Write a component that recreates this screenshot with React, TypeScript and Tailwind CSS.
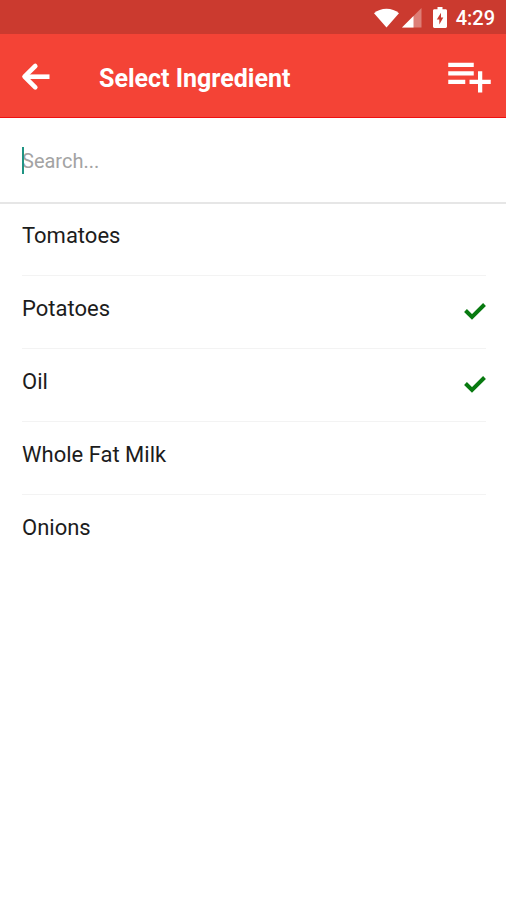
type Ingredient = { name: string; selected?: boolean };

const ingredients: Ingredient[] = [
  { name: "Tomatoes" },
  { name: "Potatoes", selected: true },
  { name: "Oil", selected: true },
  { name: "Whole Fat Milk" },
  { name: "Onions" },
];

function StatusBar() {
  return (
    <div className="flex h-[34px] items-center justify-end bg-[#cb3a2f] pt-px pr-[11px] text-white">
      <svg className="h-5 w-[25px]" viewBox="0 0 26 20" fill="currentColor" aria-hidden="true">
        <path d="M0 5C3.5 2 8 .3 13 .3S22.500 2 26 5L13 20z" />
      </svg>
      <svg className="ml-[3px] h-5 w-5" viewBox="0 0 20 20" fill="currentColor" aria-hidden="true">
        <path d="M0 19.500 19.500 0v19.500z" opacity=".35" />
        <path d="M0 19.500 11.500 8v11.500z" />
      </svg>
      <svg className="ml-[11px] h-[21px] w-[14px]" viewBox="0 0 14 21" aria-hidden="true">
        <path
          d="M4.500 0h5v2.300h3.100c.8 0 1.400.6 1.400 1.400v15.900c0 .8-.6 1.400-1.400 1.400H1.400C.6 21 0 20.400 0 19.600V3.700c0-.8.6-1.400 1.400-1.400h3.100z"
          fill="currentColor"
        />
        <path d="M8 5.800 3.800 12.400h2.500v5L10.300 10.600H8z" fill="#cb3a2f" />
      </svg>
      <span className="ml-[9px] text-[20px] leading-6 font-medium">4:29</span>
    </div>
  );
}

function Header() {
  return (
    <header className="flex h-[84px] items-center border-b border-[#ee1111] bg-[#f44336] pr-[11px] pl-5 text-white">
      <button type="button" aria-label="Back" className="size-8">
        <svg
          className="size-8"
          viewBox="0 0 32 32"
          fill="none"
          stroke="currentColor"
          strokeWidth="4.600"
          strokeLinecap="round"
          strokeLinejoin="round"
          aria-hidden="true"
        >
          <path d="M15.300 6 4.500 16.700l10.800 10.700" />
          <path d="M5 16.700h24.500" strokeLinecap="butt" />
        </svg>
      </button>
      <h1 className="ml-[47px] flex-1 pt-1.5 text-[25px] leading-8 font-bold">Select Ingredient</h1>
      <button type="button" aria-label="Add ingredient" className="size-[51px]">
        <svg className="size-[51px]" viewBox="0 0 24 24" fill="currentColor" aria-hidden="true">
          <path d="M14 10H2v2h12v-2zm0-4H2v2h12V6zm4 8v-4h-2v4h-4v2h4v4h2v-4h4v-2h-4zM2 16h8v-2H2v2z" />
        </svg>
      </button>
    </header>
  );
}

function SearchBox() {
  return (
    <div className="relative border-b-2 border-[#e6e6e6]">
      <input
        type="text"
        aria-label="Search ingredients"
        placeholder="Search..."
        className="block h-[84px] w-full bg-transparent px-[22px] pt-0.5 text-[20px] text-[#222] caret-[#1f9483] outline-none placeholder:text-[#a3a3a3]"
      />
      <span className="absolute top-[29px] left-[22px] h-[27px] w-[2px] bg-[#1f9483]" />
    </div>
  );
}

function IngredientRow({ name, selected }: Ingredient) {
  return (
    <li className="border-b border-[#f3f3f3] last:border-b-0">
      <button
        type="button"
        aria-pressed={!!selected}
        className="flex h-[72px] w-full items-center justify-between pb-1.5 text-left"
      >
        <span className="text-[22px] leading-8 text-[#1c1c1c]">{name}</span>
        {selected && (
          <svg
            className="mt-1 h-[18px] w-[22px]"
            viewBox="0 0 22 18"
            fill="none"
            stroke="#087a10"
            strokeWidth="4"
            aria-hidden="true"
          >
            <path d="m1.500 8.500 6.500 6.500L20.500 2.500" />
          </svg>
        )}
      </button>
    </li>
  );
}

export default function App() {
  return (
    <div className="min-h-screen bg-white font-[Roboto,sans-serif]">
      <StatusBar />
      <Header />
      <main>
        <SearchBox />
        <ul className="-mt-px pr-5 pl-[22px]">
          {ingredients.map((item) => (
            <IngredientRow key={item.name} {...item} />
          ))}
        </ul>
      </main>
    </div>
  );
}
